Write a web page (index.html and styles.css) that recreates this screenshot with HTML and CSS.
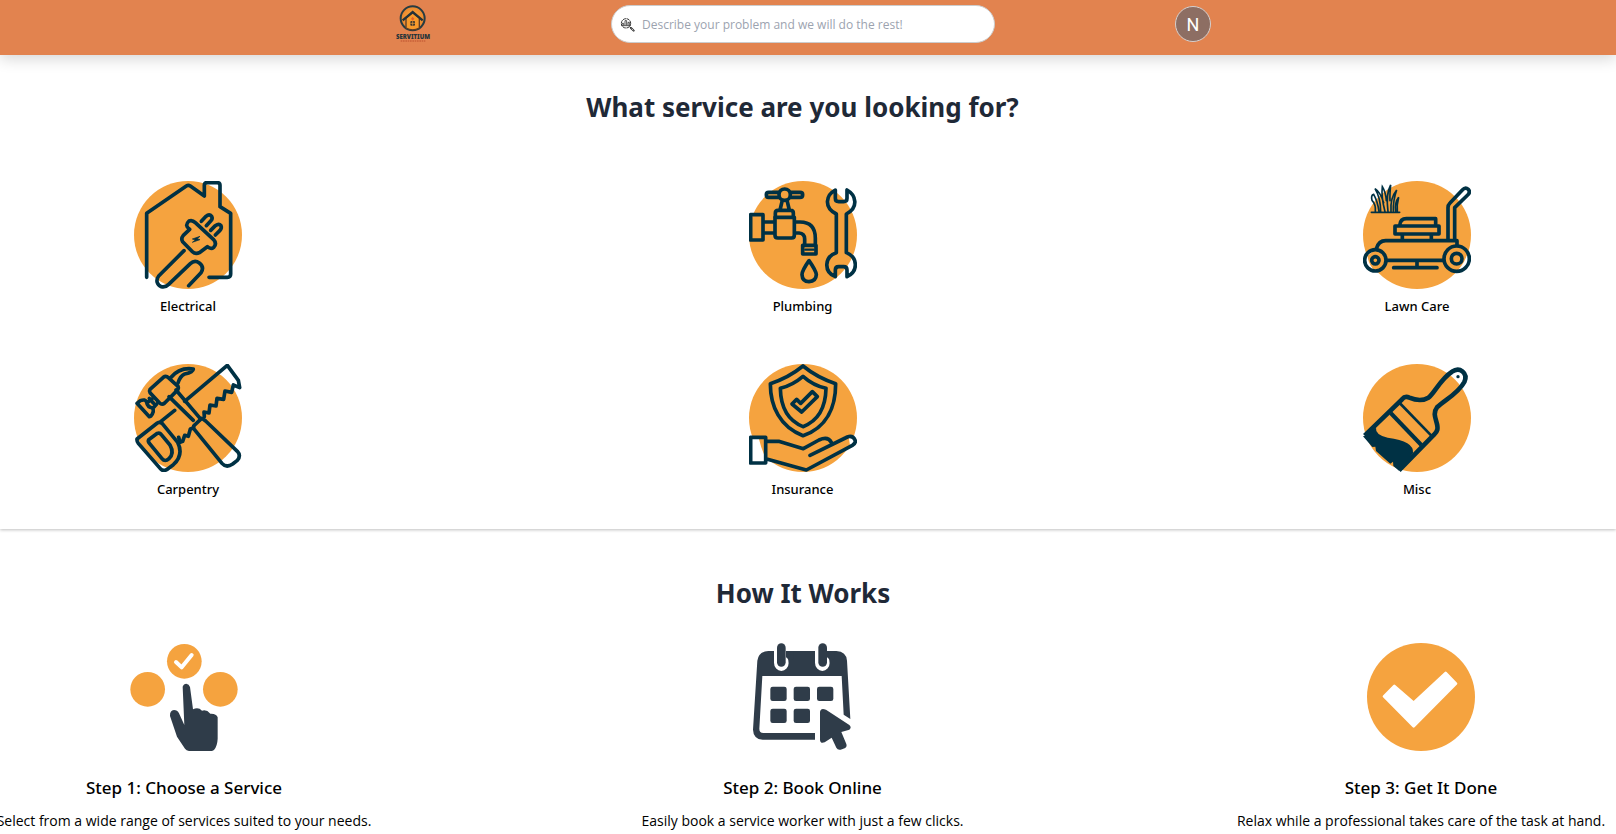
FILE: index.html
```html
<!DOCTYPE html>
<html lang="en">
<head>
<meta charset="utf-8">
<meta name="viewport" content="width=device-width, initial-scale=1">
<title>Servitium</title>
<link rel="stylesheet" href="styles.css">
</head>
<body>
<header class="topbar">
  <div class="topbar-inner">
    <a class="logo" href="#" aria-label="Servitium home">
      <svg viewBox="45 15 108 114" aria-hidden="true">
        <defs><radialGradient id="glow"><stop offset="0" stop-color="#ffb13b"/><stop offset="1" stop-color="#e8842f"/></radialGradient></defs>
        <circle cx="98" cy="55" r="36" fill="url(#glow)" stroke="#263c42" stroke-width="6"/>
        <path d="M78 54V84Q98 95 118 84V54L98 38Z" fill="#f79a2b" stroke="#5b3d27" stroke-width="4"/>
        <path d="M68 61L98 36L128 61" fill="none" stroke="#243238" stroke-width="7"/>
        <path d="M98 50l5 6-5 6-5-6z" fill="#e0602b"/>
        <rect x="91" y="63" width="14" height="14" rx="3" fill="#3b3630"/>
        <path d="M98 63v14M91 70h14" stroke="#f5a33a" stroke-width="2"/>
        <text x="99" y="116" text-anchor="middle" class="logo-name">SERVITIUM</text>
        <path d="M62 123H136" stroke="#c9623a" stroke-width="4" stroke-dasharray="5 2"/>
      </svg>
    </a>
    <label class="search">
      <svg viewBox="720 50 45 45" aria-hidden="true">
        <circle cx="738" cy="69" r="14" fill="#fff" stroke="#333" stroke-width="3" stroke-dasharray="9 2"/>
        <path d="M726 75v-6h5v6M735 75V61h5v14M744 75v-9h4v9M724 76h28" fill="none" stroke="#333" stroke-width="2.5"/>
        <path d="M748 79l5 4" stroke="#333" stroke-width="3"/>
        <path d="M753 83l8 8" stroke="#333" stroke-width="6" stroke-linecap="round"/>
        <path d="M755 85l5 5" stroke="#fff" stroke-width="2"/>
      </svg>
      <input type="text" aria-label="Describe your problem" placeholder="Describe your problem and we will do the rest!">
    </label>
    <button class="avatar" type="button" aria-label="Account">N</button>
  </div>
</header>
<main>
  <section class="services">
    <h1 class="title">What service are you looking for?</h1>
    <div class="service-grid">
      <a class="service" href="#">
        <svg class="art" viewBox="42 33 324 324" aria-hidden="true">
          <circle class="disc" cx="204" cy="195" r="162"/>
          <g class="line">
            <path d="M80 322V130L199 48Q205 44 211 48L253 78V46Q253 38 261 38H292Q300 38 300 46V110L332 130V312Q332 322 322 322H267"/>
            <path d="M192 242L116 318C106 332 112 346 124 350Q136 353 146 343L211 281Q224 269 238 279Q254 291 243 308L206 347"/>
            <path d="M209 178Q192 167 207 153Q217 149 226 158L280 208Q292 221 281 232Q273 239 262 230L238 248Q227 254 216 244L188 215Q182 206 190 196L209 178"/>
            <path d="M244 154L258 139Q268 130 275 139Q279 146 272 153L259 167M272 181L286 167Q297 159 303 167Q306 174 300 181L286 195"/>
          </g>
          <path d="M240 199L217 207 226 210 217 217 240 209 232 206z" fill="#003144" stroke="#003144" stroke-width="2"/>
        </svg>
        <span>Electrical</span>
      </a>
      <a class="service" href="#">
        <svg class="art" viewBox="39 33 324 324" aria-hidden="true">
          <circle class="disc" cx="201" cy="195" r="162"/>
          <g class="line">
            <circle cx="146" cy="74" r="17"/>
            <path d="M128 67H98Q91 67 91 74Q91 82 98 82H128M164 67H192Q200 67 200 74Q200 82 192 82H164M138 95L132 120M154 95L160 120M118 141V129Q118 121 126 121H164Q172 121 172 129V141"/>
            <path d="M44 134H81V210H44ZM117 142H175V196Q175 204 167 204H125Q117 204 117 196ZM83 156H117M83 189H117M175 156H192Q238 156 238 205V223M175 189H189Q206 190 206 207V223M200 226H240V252H200Z"/>
            <path d="M208 239H233" stroke-width="7"/>
            <path d="M219 272Q198 302 198 314Q199 335 219 335Q240 334 241 314Q240 302 219 272Z"/>
            <path d="M298 60C270 75 262 112 301 132V248C265 260 262 305 298 320V300Q298 290 308 290H323Q333 290 333 300V320C369 302 364 261 331 248V132C369 112 360 75 333 60V85Q333 95 323 95H308Q298 95 298 85Z"/>
          </g>
        </svg>
        <span>Plumbing</span>
      </a>
      <a class="service" href="#">
        <svg class="art" viewBox="39 33 324 324" aria-hidden="true">
          <circle class="disc" cx="201" cy="195" r="162"/>
          <circle cx="76" cy="271" r="32" fill="#fff"/><path d="M76 238A33 33 0 0 1 76 304Q58 290 52 258Z" fill="#f5a33f"/>
          <path d="M332 75L344 61Q354 62 354 74L342 87ZM350 258Q366 284 336 299Z" fill="#fff"/>
          <g class="line">
            <circle cx="76" cy="271" r="32"/><circle cx="76" cy="271" r="11"/>
            <circle cx="320" cy="266" r="38"/><circle cx="320" cy="266" r="16"/>
            <path d="M79 236Q86 212 107 212H321V226M110 271H280M294 211V113Q294 105 300 99L337 60Q346 50 355 58Q362 67 353 75L314 113V211M201 273V290M131 293H261"/>
            <path d="M135 168H267V192H135ZM149 166Q151 146 169 146H257V166M157 194V210M244 194V210"/>
          </g>
          <g class="grass">
            <path d="M64 127H149"/>
            <path d="M76 125Q78 103 66 91M66 91Q62 75 71 73Q83 94 87 125M92 125Q92 84 75 56Q91 66 101 98M105 125Q93 79 97 50Q107 66 109 92M114 125Q107 72 122 45Q119 74 120 92M123 125Q120 84 140 60Q129 91 130 124M137 125Q134 96 146 82Q140 104 142 125"/>
          </g>
        </svg>
        <span>Lawn Care</span>
      </a>
      <a class="service" href="#">
        <svg class="art" viewBox="42 27 324 324" aria-hidden="true">
          <circle class="disc" cx="204" cy="189" r="162"/>
          <path d="M295 57L322 31 359 76V96L342 89Q320 76 307 60ZM347 285L361 297 357 313 325 332 308 326Q338 313 347 285Z" fill="#fff"/>
          <g class="line">
            <path d="M90 103L130 67Q138 61 145 68L174 94Q177 101 171 107L134 144Q126 151 119 144L90 113Q87 108 90 103Z"/>
            <path d="M151 69Q178 36 220 42Q219 52 194 57Q181 62 174 84M88 130L100 144M51 145L61 137Q76 131 80 142Q82 157 98 159Q104 170 92 184L88 185L51 145M84 141L96 132M100 158L110 147"/>
            <path d="M147 125L220 196M168 105L241 191"/>
            <path d="M194 139L322 31L355 76L359 98L340 90L335 112L315 108L311 133L291 130L288 153L270 150L267 174L252 171L253 185M164 166L123 199M176 247L180 262L188 259L194 241L205 244L211 222L220 219"/>
            <path d="M245 190Q251 193 257 198L352 289Q364 302 352 316L338 327Q319 340 306 325L223 223Q218 215 224 210Z"/>
            <path d="M51 252Q50 259 55 265L121 341Q128 350 140 344L160 329Q192 300 173 262L127 206Q120 199 112 204Z"/>
            <path d="M86 254L112 235Q119 232 124 239L150 270Q164 295 147 311Q135 322 126 311L89 266Q83 259 86 254Z"/>
          </g>
        </svg>
        <span>Carpentry</span>
      </a>
      <a class="service" href="#">
        <svg class="art" viewBox="39 27 324 324" aria-hidden="true">
          <circle class="disc" cx="201" cy="189" r="162"/>
          <path d="M44 249H68Q78 289 90 311V323H44Z" fill="#fff"/>
          <path d="M338 246Q355 244 357 264L342 271Z" fill="#fff"/>
          <g class="line">
            <path d="M201 33Q244 68 299 86C299 154 274 217 201 242C132 216 103 154 103 86Q158 68 201 33Z"/>
            <path d="M201 64Q231 91 270 100C269 151 251 196 201 215C151 195 134 151 133 100Q171 90 201 64Z"/>
            <path d="M168 147L182 133L194 145L229 110L244 125L197 171Z"/>
            <path d="M44 247H89V324H44ZM92 259H128L202 281L249 255Q276 243 286 262M222 301L334 246Q351 240 358 257Q359 265 349 271L211 345L92 312"/>
          </g>
        </svg>
        <span>Insurance</span>
      </a>
      <a class="service" href="#">
        <svg class="art" viewBox="39 27 324 324" aria-hidden="true">
          <circle class="disc" cx="201" cy="189" r="162"/>
          <path d="M308 56Q336 43 343 67L337 87Q327 70 308 56Z" fill="#fff"/>
          <circle cx="324" cy="65" r="5" fill="#003144"/>
          <path d="M44 242L78 218Q75 239 113 248Q193 258 189 294L147 347L130 333 129 320 121 326 78 288 76 275 67 276 39 244Z" fill="#003144"/>
          <path class="brush" d="M44 242L156 133Q165 122 178 128Q212 142 235 128C252 117 271 72 306 50C329 34 355 54 343 81C325 115 286 134 261 157C243 180 267 204 262 224Q260 232 252 239L147 346"/>
          <path d="M122 174L214 270" fill="none" stroke="#003144" stroke-width="12"/>
          <path d="M149 144L244 242" fill="none" stroke="#003144" stroke-width="8"/>
        </svg>
        <span>Misc</span>
      </a>
    </div>
  </section>
  <section class="how">
    <h2 class="title">How It Works</h2>
    <div class="steps">
      <article class="step">
        <svg class="art" viewBox="391 39 324 324" aria-hidden="true">
          <g fill="#f5a33f"><circle cx="444" cy="178" r="52"/><circle cx="554" cy="94" r="52"/><circle cx="662" cy="178" r="52"/></g>
          <path d="M529 96L546 112L576 75" fill="none" stroke="#fff" stroke-width="12" stroke-linecap="round" stroke-linejoin="round"/>
          <path d="M549 170Q552 161 560 161Q568 162 571 171L580 238Q596 230 607 242Q621 238 632 251Q650 250 654 262V326Q653 348 643 360L637 363H568Q560 362 556 356L532 320L511 258Q510 242 523 240Q533 240 538 250L554 285Z" fill="#2f3c49"/>
        </svg>
        <h3>Step 1: Choose a Service</h3>
        <p>Select from a wide range of services suited to your needs.</p>
      </article>
      <article class="step">
        <svg class="art" viewBox="387 39 324 324" aria-hidden="true">
          <path d="M445 63H649Q679 65 681 92L691 267L671 254L665 138H427L418 296Q418 309 430 309H585V329H428Q400 327 399 299L412 92Q416 65 445 63Z" fill="#2f3c49"/>
          <g fill="#fff"><path d="M462 63H506V98A22 25 0 0 1 462 98ZM585 63H629V98A22 25 0 0 1 585 98Z"/></g>
          <path d="M498 63V82Q507 88 506 98L520 85V63ZM621 63V82Q630 88 629 98L643 85V63Z" fill="#2f3c49"/>
          <g fill="#2f3c49"><rect x="471" y="40" width="26" height="70" rx="13"/><rect x="595" y="40" width="26" height="70" rx="13"/>
          <rect x="451" y="170" width="49" height="43" rx="7"/><rect x="521" y="170" width="49" height="43" rx="7"/><rect x="591" y="170" width="49" height="43" rx="7"/><rect x="451" y="236" width="49" height="43" rx="7"/><rect x="521" y="236" width="49" height="43" rx="7"/></g>
          <path d="M600 246Q602 232 618 239L688 285Q696 293 688 299L664 306L679 342Q682 350 674 355L662 359Q653 361 649 353L635 323L614 337Q601 342 600 330Z" fill="#2f3c49"/>
        </svg>
        <h3>Step 2: Book Online</h3>
        <p>Easily book a service worker with just a few clicks.</p>
      </article>
      <article class="step">
        <svg class="art" viewBox="453 39 324 324" aria-hidden="true">
          <circle class="disc" cx="615" cy="201" r="162"/>
          <path d="M504 199L535 168L593 218L689 129L720 161L593 289Z" fill="#fff" stroke="#fff" stroke-width="8" stroke-linejoin="round"/>
        </svg>
        <h3>Step 3: Get It Done</h3>
        <p>Relax while a professional takes care of the task at hand.</p>
      </article>
    </div>
  </section>
</main>
</body>
</html>
```
FILE: styles.css
```css
* {
  box-sizing: border-box;
}

body {
  margin: 0;
  background: #fff;
  color: #000;
  font-family: "Noto Sans", "Open Sans", sans-serif;
  overflow-x: hidden;
}

h1, h2, h3, p {
  margin: 0;
}

.topbar {
  position: relative;
  padding: 5px 10px 12px 0;
  background: #e2834f;
  box-shadow: 0 4px 14px rgba(0, 0, 0, 0.16);
}

.topbar-inner {
  display: flex;
  align-items: center;
  justify-content: space-between;
  max-width: 816px;
  margin: 0 auto;
}

.logo,
.logo svg {
  display: block;
  width: 36px;
  height: 38px;
}

.logo-name {
  font-family: "Noto Sans", sans-serif;
  font-size: 18px;
  font-weight: 900;
  fill: #26343a;
}

.search {
  display: flex;
  align-items: center;
  gap: 7px;
  width: 384px;
  height: 38px;
  padding: 0 8px;
  background: #fff;
  border: 1px solid #ccc;
  border-radius: 19px;
}

.search svg {
  flex: none;
  width: 15px;
  height: 15px;
}

.search input {
  flex: 1;
  min-width: 0;
  padding: 0;
  border: 0;
  outline: 0;
  background: none;
  font: 12px "Open Sans", sans-serif;
}

.search input::placeholder {
  color: #9ca3af;
}

.avatar {
  width: 36px;
  height: 36px;
  padding: 0;
  border: 1px solid #d6d0ce;
  border-radius: 50%;
  background: #8d6e63;
  color: #fff;
  font: 18px Roboto, sans-serif;
}

.title {
  color: #1f2937;
  font-size: 26px;
  font-weight: 700;
  line-height: 36px;
  text-align: center;
}

.services {
  padding: 34px 11px 30px 0;
  box-shadow: 0 1px 3px rgba(0, 0, 0, 0.25);
}

.service-grid {
  display: grid;
  grid-template-columns: repeat(3, 108px);
  justify-content: space-between;
  row-gap: 48px;
  padding: 56px 134px 0;
}

.service {
  display: flex;
  flex-direction: column;
  align-items: center;
  gap: 7px;
  color: #000;
  font-size: 13px;
  font-weight: 500;
  line-height: 20px;
  text-decoration: none;
  white-space: nowrap;
}

.art {
  display: block;
  width: 108px;
  height: 108px;
}

.disc {
  fill: #f5a33f;
}

.line {
  fill: none;
  stroke: #003144;
  stroke-width: 11px;
  stroke-linecap: round;
  stroke-linejoin: round;
}

.grass {
  fill: none;
  stroke: #003144;
  stroke-width: 5px;
  stroke-linecap: round;
}

.brush {
  fill: none;
  stroke: #003144;
  stroke-width: 14px;
}

.how {
  padding: 46px 5px 0 0;
  overflow: hidden;
}

.how .title {
  padding-right: 5px;
}

.steps {
  display: flex;
  justify-content: space-between;
  margin-left: -6px;
  padding-top: 32px;
}

.step {
  display: flex;
  flex-direction: column;
  align-items: center;
  width: 380px;
  white-space: nowrap;
}

.step h3 {
  padding-top: 25px;
  font-size: 17px;
  font-weight: 500;
  line-height: 24px;
}

.step p {
  padding-top: 10px;
  font-family: "Open Sans", sans-serif;
  font-size: 14px;
  font-weight: 400;
  line-height: 22px;
}
```
